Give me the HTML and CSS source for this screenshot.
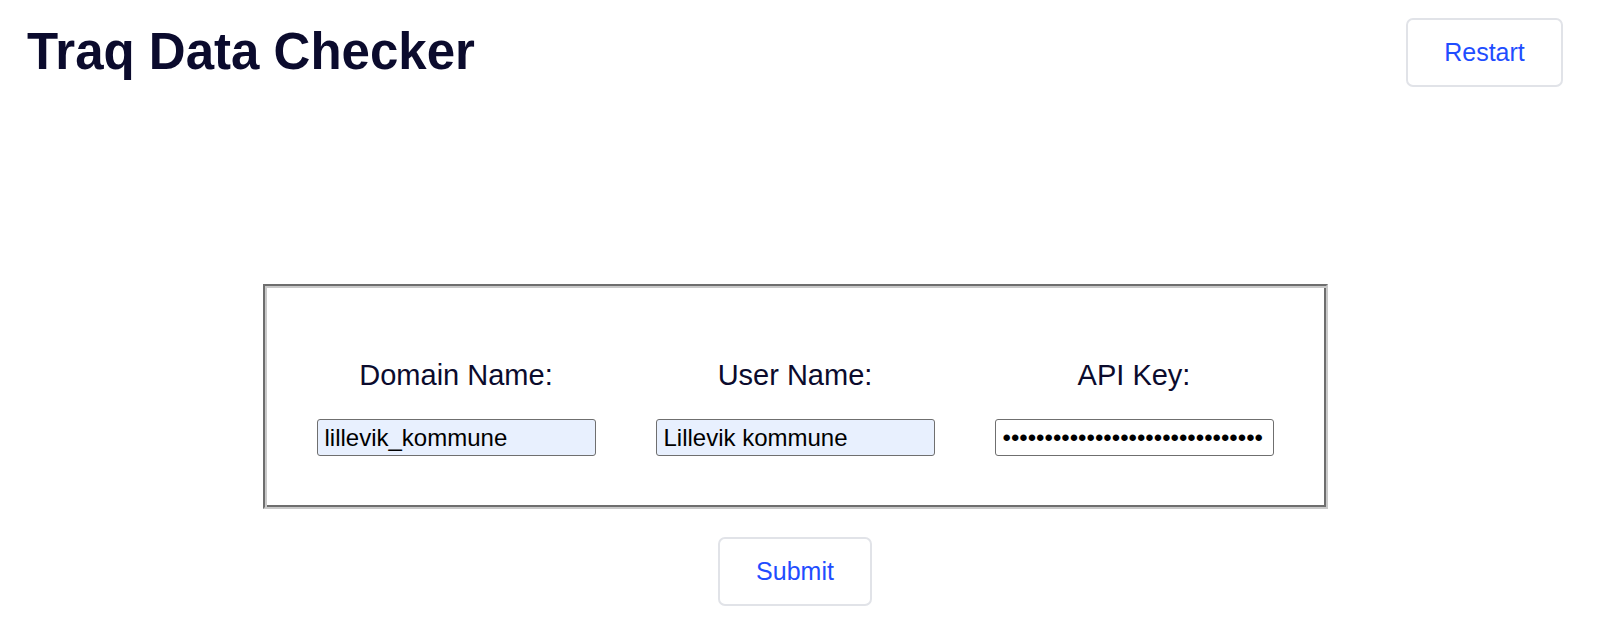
FILE: index.html
```html
<!DOCTYPE html>
<html lang="en">
<head>
<meta charset="utf-8">
<title>Traq Data Checker</title>
<link rel="stylesheet" href="styles.css">
</head>
<body>
<header class="top-bar">
  <h1 class="app-title">Traq Data Checker</h1>
  <button class="btn btn-restart" type="button">Restart</button>
</header>
<main class="main">
  <form class="login-form">
    <div class="field-box">
      <div class="field">
        <label class="field-label" for="domain">Domain Name:</label>
        <input class="field-input autofilled" id="domain" type="text" value="lillevik_kommune">
      </div>
      <div class="field">
        <label class="field-label" for="user">User Name:</label>
        <input class="field-input autofilled" id="user" type="text" value="Lillevik kommune">
      </div>
      <div class="field">
        <label class="field-label" for="key">API Key:</label>
        <input class="field-input" id="key" type="password" value="abcdefghijklmnopqrstuvwxyz01234">
      </div>
    </div>
    <button class="btn btn-submit" type="button">Submit</button>
  </form>
</main>
</body>
</html>
```
FILE: styles.css
```css
html, body {
  margin: 0;
  padding: 0;
  background: #ffffff;
}

body {
  font-family: "Liberation Sans", Arial, Helvetica, sans-serif;
  color: #0b0b2d;
  width: 1600px;
  height: 625px;
  overflow: hidden;
}

.top-bar {
  display: flex;
  justify-content: space-between;
  align-items: center;
  padding: 18px 37px 0 27px;
}

.app-title {
  margin: 0;
  font-size: 51px;
  font-weight: 700;
  line-height: 1.15;
  color: #0b0b2d;
}

.btn {
  display: flex;
  align-items: center;
  justify-content: center;
  height: 69px;
  background: #ffffff;
  border: 2px solid #e1e3e8;
  border-radius: 7px;
  color: #1f4dff;
  font-family: "Liberation Sans", Arial, Helvetica, sans-serif;
  font-size: 25px;
  padding: 0;
  cursor: pointer;
}

.btn-restart {
  width: 157px;
}

.btn-submit {
  width: 154px;
}

.main {
  padding-right: 10px;
  margin-top: 197px;
}

.login-form {
  display: flex;
  flex-direction: column;
  align-items: center;
  gap: 28px;
}

.field-box {
  width: 1065px;
  box-sizing: border-box;
  display: grid;
  grid-template-columns: 1fr 1fr 1fr;
  padding: 73px 22px 51px 22px;
  border: 2px solid;
  border-color: #6e6e6e #c9c9c9 #c9c9c9 #6e6e6e;
  box-shadow: inset 2px 2px 0 #c9c9c9, inset -2px -2px 0 #6e6e6e;
}

.field {
  display: flex;
  flex-direction: column;
  align-items: center;
}

.field-label {
  font-size: 29px;
  line-height: 33px;
  color: #0b0b2d;
  margin-bottom: 27px;
}

.field-input {
  width: 279px;
  height: 37px;
  box-sizing: border-box;
  border: 1px solid #6f6f6f;
  border-radius: 3px;
  padding: 0 7px;
  font-family: "Liberation Sans", Arial, Helvetica, sans-serif;
  font-size: 24px;
  color: #000000;
  background: #ffffff;
  outline: none;
}

.field-input.autofilled {
  background: #e8f0fe;
}
```
